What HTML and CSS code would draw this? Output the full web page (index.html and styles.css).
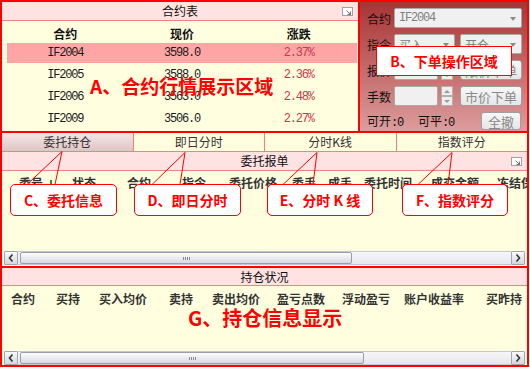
FILE: index.html
```html
<!DOCTYPE html>
<html lang="zh-CN">
<head>
<meta charset="utf-8">
<title>交易界面</title>
<link rel="stylesheet" href="styles.css">
</head>
<body>
<div class="stage">
  <div class="app">
    <div class="top">
      <div class="quotes">
        <div class="bar">
          <span class="bar-title">合约表</span>
          <svg class="pop" width="11" height="9" viewBox="0 0 11 9"><rect x="0.5" y="0.5" width="10" height="8" fill="#fff" stroke="#a0a0a0"/><path d="M4.5 3.5 L8.5 7.5 M5.5 7.5 H8.5 V4.5" stroke="#707070" fill="none"/></svg>
        </div>
        <div class="qtable">
          <div class="qrow qhead"><span>合约</span><span>现价</span><span>涨跌</span></div>
          <div class="qbody">
            <div class="qrow sel"><span>IF2004</span><span>3598.0</span><span class="chg">2.37%</span></div>
            <div class="qrow"><span>IF2005</span><span>3588.0</span><span class="chg">2.36%</span></div>
            <div class="qrow"><span>IF2006</span><span>3563.0</span><span class="chg">2.48%</span></div>
            <div class="qrow"><span>IF2009</span><span>3506.0</span><span class="chg">2.27%</span></div>
          </div>
        </div>
      </div>
      <div class="order">
        <div class="frow">
          <span class="lbl">合约</span>
          <div class="field select full"><span class="mono">IF2004</span><i class="arr"></i></div>
        </div>
        <div class="frow">
          <span class="lbl">指令</span>
          <div class="field select half">买入<i class="arr"></i></div>
          <div class="field select half2">开仓<i class="arr"></i></div>
        </div>
        <div class="frow">
          <span class="lbl">报价</span>
          <div class="field inp"></div>
          <div class="spin"><b><i class="up"></i></b><b><i class="dn"></i></b></div>
          <div class="btn wide">限价下单</div>
        </div>
        <div class="frow">
          <span class="lbl">手数</span>
          <div class="field inp"></div>
          <div class="spin"><b><i class="up"></i></b><b><i class="dn"></i></b></div>
          <div class="btn wide">市价下单</div>
        </div>
        <div class="frow last">
          <span class="avail">可开<span class="mono">:0</span></span>
          <span>可平<span class="mono">:0</span></span>
          <div class="btn small">全撤</div>
        </div>
      </div>
    </div>

    <div class="tabs">
      <div class="tab active">委托持仓</div>
      <div class="tab">即日分时</div>
      <div class="tab">分时K线</div>
      <div class="tab">指数评分</div>
    </div>

    <div class="section orders">
      <div class="bar">
        <span class="bar-title">委托报单</span>
        <svg class="pop" width="11" height="9" viewBox="0 0 11 9"><rect x="0.5" y="0.5" width="10" height="8" fill="#fff" stroke="#a0a0a0"/><path d="M4.5 3.5 L8.5 7.5 M5.5 7.5 H8.5 V4.5" stroke="#707070" fill="none"/></svg>
      </div>
      <div class="cols ocols">
        <span>委号<svg class="sort" width="8" height="9" viewBox="0 0 8 9"><path d="M3 0h2v4h3l-4 5-4-5h3z" fill="#239a23"/></svg></span>
        <span>状态</span><span>合约</span><span>指令</span><span>委托价格</span><span>委手</span><span>成手</span><span>委托时间</span><span>成交金额</span><span>冻结保证金</span>
      </div>
      <div class="fill"></div>
      <div class="hscroll">
        <div class="sbtn"><svg width="6" height="8" viewBox="0 0 6 8"><path d="M4.5 0.5 L1.5 4 L4.5 7.5" stroke="#333" stroke-width="1.6" fill="none"/></svg></div>
        <div class="track"><div class="thumb t1"><i class="grip"></i></div></div>
        <div class="sbtn"><svg width="6" height="8" viewBox="0 0 6 8"><path d="M1.5 0.5 L4.5 4 L1.5 7.5" stroke="#333" stroke-width="1.6" fill="none"/></svg></div>
      </div>
    </div>

    <div class="section positions">
      <div class="bar single">
        <span class="bar-title">持仓状况</span>
      </div>
      <div class="cols pcols">
        <span>合约</span><span>买持</span><span>买入均价</span><span>卖持</span><span>卖出均价</span><span>盈亏点数</span><span>浮动盈亏</span><span>账户收益率</span><span>买昨持</span>
      </div>
      <div class="fill"></div>
      <div class="hscroll">
        <div class="sbtn"><svg width="6" height="8" viewBox="0 0 6 8"><path d="M4.5 0.5 L1.5 4 L4.5 7.5" stroke="#333" stroke-width="1.6" fill="none"/></svg></div>
        <div class="track"><div class="thumb t2"><i class="grip"></i></div></div>
        <div class="sbtn"><svg width="6" height="8" viewBox="0 0 6 8"><path d="M1.5 0.5 L4.5 4 L1.5 7.5" stroke="#333" stroke-width="1.6" fill="none"/></svg></div>
      </div>
    </div>
  </div>

  <svg class="lines" width="530" height="369" viewBox="0 0 530 369">
    <polyline points="27,184.5 62,151.5 55,184.5" />
    <polyline points="152,184.5 185,152.5 180,184.5" />
    <polyline points="283,184.5 317,152.5 313,184.5" />
    <polyline points="418,184.5 452,152.5 448,184.5" />
  </svg>

  <div class="note-a">A、合约行情展示区域</div>
  <div class="note-b">B、下单操作区域</div>
  <div class="callout c1">C、委托信息</div>
  <div class="callout c2">D、即日分时</div>
  <div class="callout c3">E、分时 K 线</div>
  <div class="callout c4">F、指数评分</div>
  <div class="note-g">G、持仓信息显示</div>
</div>
</body>
</html>
```
FILE: styles.css
```css
* { box-sizing: border-box; margin: 0; padding: 0; }

body {
  margin: 0;
  background: #ffffff;
  font-family: "Noto Sans CJK SC", sans-serif;
  font-size: 12px;
  color: #111;
}

.stage {
  position: relative;
  width: 530px;
  height: 369px;
}

.app {
  width: 529px;
  height: 367px;
  border: 2px solid #ff0000;
  background: #ffffe0;
  display: flex;
  flex-direction: column;
  overflow: hidden;
}

.mono {
  font-family: "Liberation Mono", "Noto Sans CJK SC", monospace;
  letter-spacing: -1.2px;
}

/* ---------- top ---------- */
.top {
  flex: none;
  height: 131px;
  display: flex;
  border-bottom: 2px solid #ff0000;
}

.quotes {
  width: 358px;
  border-right: 2px solid #ff0000;
}

.bar {
  height: 19px;
  background: #ffe2e2;
  border-bottom: 1px solid #f48080;
  display: grid;
  grid-template-columns: 1fr auto 1fr;
  align-items: center;
  line-height: 18px;
  color: #111;
}
.bar-title { grid-column: 2; }
.pop { grid-column: 3; justify-self: end; margin-right: 5px; }

.qtable { padding: 2px 1px 0 5px; }
.qrow {
  display: grid;
  grid-template-columns: repeat(3, 1fr);
  height: 20px;
  align-items: center;
  text-align: center;
  font-family: "Liberation Mono", "Noto Sans CJK SC", monospace;
  letter-spacing: -1.2px;
  color: #1a1a1a;
}
.qhead {
  font-family: "Noto Sans CJK SC", sans-serif;
  font-weight: bold;
  letter-spacing: 0;
  color: #111;
}
.qbody { display: flex; flex-direction: column; gap: 2px; }
.qrow.sel { background: #ffa5a5; }
.chg { color: #c8384c; }

/* ---------- order panel ---------- */
.order {
  flex: 1;
  background: linear-gradient(#a83434, #dd9c9c);
  padding: 6px 5px 0 7px;
  display: flex;
  flex-direction: column;
  gap: 6px;
}
.frow {
  height: 20px;
  display: flex;
  align-items: center;
}
.lbl { width: 27px; flex: none; color: #111; }

.field {
  height: 20px;
  background: #f0f0f0;
  border: 1px solid #a9a9a9;
  border-radius: 2px;
  color: #808080;
  display: flex;
  align-items: center;
  padding-left: 4px;
  position: relative;
}
.select.full { flex: 1; }
.select.half { width: 61px; }
.select.half2 { width: 62px; margin-left: 5px; }
.arr {
  position: absolute;
  right: 5px;
  top: 8px;
  width: 0;
  height: 0;
  border-left: 3.5px solid transparent;
  border-right: 3.5px solid transparent;
  border-top: 4px solid #8a8a8a;
}
.inp { width: 44px; }

.spin {
  width: 12px;
  height: 20px;
  margin-left: 3px;
  display: flex;
  flex-direction: column;
  gap: 0;
}
.spin b {
  flex: 1;
  background: #eeeeee;
  border: 1px solid #b0b0b0;
  display: flex;
  align-items: center;
  justify-content: center;
}
.spin .up { border-left: 3px solid transparent; border-right: 3px solid transparent; border-bottom: 3px solid #999; }
.spin .dn { border-left: 3px solid transparent; border-right: 3px solid transparent; border-top: 3px solid #999; }

.btn {
  height: 20px;
  background: linear-gradient(#f7f7f7, #e6e6e6);
  border: 1px solid #a0a0a0;
  border-radius: 3px;
  color: #8a8a8a;
  display: flex;
  align-items: center;
  justify-content: center;
  font-size: 13px;
}
.btn.wide { width: 62px; margin-left: auto; }
.btn.small { width: 40px; height: 18px; margin-left: auto; margin-right: 1px; }
.frow.last { height: 18px; color: #111; }
.avail { width: 51px; }

/* ---------- tabs ---------- */
.tabs {
  flex: none;
  height: 19px;
  display: flex;
  border-bottom: 1px solid #f48080;
}
.tab {
  flex: 1;
  text-align: center;
  line-height: 18px;
  color: #333;
  border-right: 1px solid #f48080;
}
.tab:last-child { border-right: none; }
.tab.active { background: linear-gradient(#f6e6e6, #dcc6c6); }

/* ---------- sections ---------- */
.section {
  display: flex;
  flex-direction: column;
}
.orders { height: 114px; }
.positions { height: 99px; border-top: 2px solid #ff0000; }
.positions .bar { height: 18px; }

.cols {
  display: grid;
  height: 20px;
  align-items: center;
  font-weight: bold;
  color: #333;
  white-space: nowrap;
  overflow: hidden;
  flex: none;
}
.ocols {
  margin-top: 1px;
  padding-left: 17px;
  grid-template-columns: 53px 55px 55px 47px 63px 36px 36px 67px 66px 1fr;
}
.pcols {
  margin-top: 2px;
  padding-left: 9px;
  grid-template-columns: 45px 43px 70px 43px 65px 65px 62px 82px 1fr;
}
.sort { margin-left: 4px; vertical-align: -1px; }
.fill { flex: 1; }

.hscroll {
  flex: none;
  height: 14px;
  margin: 0 2px;
  display: flex;
}
.orders .hscroll { margin-bottom: 1px; }
.sbtn {
  width: 14px;
  height: 14px;
  border: 1px solid #a4a4b4;
  border-radius: 1px;
  background: linear-gradient(#fafafc, #d6d6e0);
  display: flex;
  align-items: center;
  justify-content: center;
}
.track {
  flex: 1;
  background: linear-gradient(#f6f6f9, #e6e6ee);
  border-top: 1px solid #c6c6d0;
  border-bottom: 1px solid #c6c6d0;
  padding-left: 2px;
  display: flex;
}
.thumb {
  height: 100%;
  border: 1px solid #9c9cac;
  border-radius: 2px;
  background: linear-gradient(#fdfdfe, #d8d8e4);
  display: flex;
  align-items: center;
  justify-content: center;
}
.t1 { width: 332px; }
.t2 { width: 344px; }
.grip {
  width: 7px;
  height: 3px;
  background: repeating-linear-gradient(90deg, #8a8a98 0 1px, transparent 1px 2px);
}

/* ---------- annotations ---------- */
.lines {
  position: absolute;
  left: 0;
  top: 0;
  pointer-events: none;
}
.lines polyline { fill: none; stroke: #ff0000; stroke-width: 1; }

.note-a, .note-g, .note-b, .callout {
  position: absolute;
  color: #ff0000;
  font-weight: bold;
  font-family: "Noto Sans CJK SC", sans-serif;
  white-space: nowrap;
}
.note-a { left: 90px; top: 75px; font-size: 19px; line-height: 22px; }
.note-g { left: 188px; top: 306px; font-size: 20px; line-height: 24px; }
.note-b {
  left: 376px; top: 46px; width: 136px; height: 30px;
  background: #ffffff;
  border: 1px solid #ff0000;
  font-size: 14px;
  display: flex; align-items: center; justify-content: center;
}
.callout {
  top: 184px; height: 32px;
  background: #ffffff;
  border: 1px solid #ff0000;
  border-radius: 5px;
  font-size: 14px;
  display: flex; align-items: center; justify-content: center;
}
.c1 { left: 10px; width: 107px; }
.c2 { left: 134px; width: 107px; }
.c3 { left: 267px; width: 106px; }
.c4 { left: 402px; width: 106px; }
```
